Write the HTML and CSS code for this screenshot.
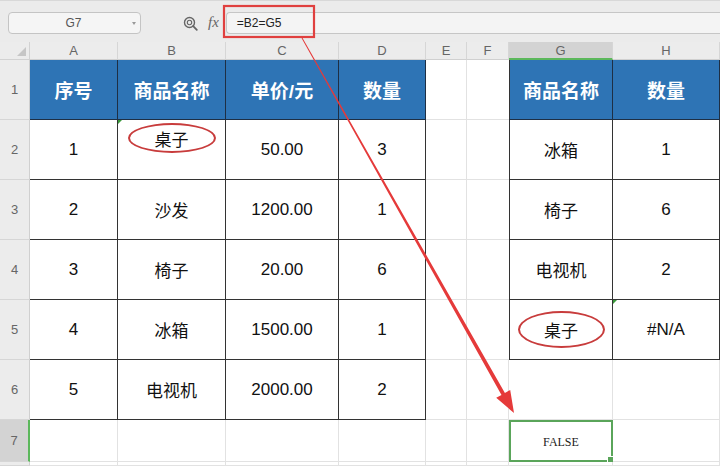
FILE: index.html
```html
<!DOCTYPE html>
<html lang="zh-CN">
<head>
  <meta charset="UTF-8" />
  <title>Sheet</title>
  <link rel="stylesheet" href="styles.css">
</head>
<body>
  <div class="toolbar">
    <div class="namebox"><span class="name">G7</span><span class="caret"></span></div>
    <svg class="zoom-ico" width="15" height="15" viewBox="0 0 15 15">
      <circle cx="6.5" cy="6.5" r="5" fill="none" stroke="#666" stroke-width="1.4"/>
      <circle cx="6.5" cy="6.5" r="2.2" fill="none" stroke="#666" stroke-width="1.1"/>
      <line x1="10.2" y1="10.2" x2="13.8" y2="13.8" stroke="#666" stroke-width="1.8" stroke-linecap="round"/>
    </svg>
    <span class="fx">fx</span>
    <div class="formula">=B2=G5</div>
  </div>

  <div class="sheet">
    <div class="corner"></div>
    <div class="colh">A</div>
    <div class="colh">B</div>
    <div class="colh">C</div>
    <div class="colh">D</div>
    <div class="colh">E</div>
    <div class="colh">F</div>
    <div class="colh sel">G</div>
    <div class="colh">H</div>

    <div class="rowh">1</div>
    <div class="c t th">序号</div>
    <div class="c t th">商品名称</div>
    <div class="c t th">单价/元</div>
    <div class="c t th">数量</div>
    <div class="c"></div>
    <div class="c nr"></div>
    <div class="c t th gl">商品名称</div>
    <div class="c t th">数量</div>

    <div class="rowh">2</div>
    <div class="c t">1</div>
    <div class="c t top mark"><span class="oval small">桌子</span></div>
    <div class="c t">50.00</div>
    <div class="c t">3</div>
    <div class="c"></div>
    <div class="c nr"></div>
    <div class="c t gl">冰箱</div>
    <div class="c t">1</div>

    <div class="rowh">3</div>
    <div class="c t">2</div>
    <div class="c t">沙发</div>
    <div class="c t">1200.00</div>
    <div class="c t">1</div>
    <div class="c"></div>
    <div class="c nr"></div>
    <div class="c t gl">椅子</div>
    <div class="c t">6</div>

    <div class="rowh">4</div>
    <div class="c t">3</div>
    <div class="c t">椅子</div>
    <div class="c t">20.00</div>
    <div class="c t">6</div>
    <div class="c"></div>
    <div class="c nr"></div>
    <div class="c t gl">电视机</div>
    <div class="c t">2</div>

    <div class="rowh">5</div>
    <div class="c t">4</div>
    <div class="c t">冰箱</div>
    <div class="c t">1500.00</div>
    <div class="c t">1</div>
    <div class="c"></div>
    <div class="c nr"></div>
    <div class="c t gl"><span class="oval">桌子</span></div>
    <div class="c t mark">#N/A</div>

    <div class="rowh">6</div>
    <div class="c t">5</div>
    <div class="c t">电视机</div>
    <div class="c t">2000.00</div>
    <div class="c t">2</div>
    <div class="c"></div>
    <div class="c"></div>
    <div class="c"></div>
    <div class="c"></div>

    <div class="rowh sel">7</div>
    <div class="c"></div>
    <div class="c"></div>
    <div class="c"></div>
    <div class="c"></div>
    <div class="c"></div>
    <div class="c"></div>
    <div class="c active">FALSE</div>
    <div class="c"></div>

    <div class="rowh"></div>
    <div class="c"></div>
    <div class="c"></div>
    <div class="c"></div>
    <div class="c"></div>
    <div class="c"></div>
    <div class="c"></div>
    <div class="c"></div>
    <div class="c"></div>
  </div>

  <!-- red annotation: box round the formula and the arrow down to G7 -->
  <svg class="annot" width="720" height="466" viewBox="0 0 720 466">
    <rect x="224" y="6" width="90" height="31" fill="none" stroke="#e0403f" stroke-width="2.2"/>
    <polygon fill="#e53a3a" points="301.6,38.2 302.4,37.8 504.9,392.9 510.2,390 514,413 496.2,397.8 501.5,394.9"/>
  </svg>
</body>
</html>
```

FILE: styles.css
```css
* {
  box-sizing: border-box;
}
body {
  margin: 0;
  width: 720px;
  height: 466px;
  overflow: hidden;
  position: relative;
  background: #fff;
  font-family: 'Liberation Sans', 'Noto Sans CJK SC', sans-serif;
  color: #111;
}
.toolbar {
  height: 42px;
  background: #ebebeb;
  border-top: 1px solid #d8d8d8;
  display: flex;
  align-items: flex-start;
  padding: 11px 0 0 8px;
}
.namebox {
  width: 133px;
  height: 22px;
  border: 1px solid #c4c4c4;
  border-radius: 4px;
  background: #f5f5f5;
  display: flex;
  align-items: center;
  padding-right: 4px;
}
.name {
  flex: 1;
  text-align: center;
  font-size: 12px;
  color: #555;
  padding-left: 6px;
}
.caret {
  width: 0;
  height: 0;
  border-left: 2px solid transparent;
  border-right: 2px solid transparent;
  border-top: 3px solid #999;
}
.zoom-ico {
  margin: 4px 0 0 42px;
}
.fx {
  margin: 2px 0 0 10px;
  font-family: 'Liberation Serif', serif;
  font-style: italic;
  font-size: 15px;
  color: #666;
}
.formula {
  flex: 1;
  height: 22px;
  margin-left: 7px;
  border: 1px solid #c6c6c6;
  border-right: none;
  border-radius: 4px 0 0 4px;
  background: #f4f4f4;
  padding-left: 10px;
  display: flex;
  align-items: center;
  font-size: 12px;
  color: #222;
}

.sheet {
  display: grid;
  grid-template-columns: 30px 88px 108px 113px 87px 41px 42px 104px 107px;
  grid-template-rows: 18px repeat(6, 60px) 42px 1fr;
  height: 424px;
}
.corner,
.colh,
.rowh {
  background: #ececec;
  color: #666;
  font-size: 13px;
  display: flex;
  align-items: center;
  justify-content: center;
}
.corner {
  border-right: 1px solid #d2d2d2;
  border-bottom: 1px solid #d2d2d2;
  position: relative;
}
.corner::after {
  content: '';
  position: absolute;
  right: 3px;
  bottom: 3px;
  border-left: 9px solid transparent;
  border-bottom: 9px solid #c6c6c6;
}
.colh {
  border-right: 1px solid #d6d6d6;
  border-bottom: 1px solid #d0d0d0;
}
.colh.sel {
  background: #d3d3d3;
  border-bottom: 2px solid #5cb85c;
}
.rowh {
  border-right: 1px solid #d0d0d0;
  border-bottom: 1px solid #d6d6d6;
}
.rowh.sel {
  background: #d3d3d3;
  border-right: 2px solid #5cb85c;
}

.c {
  border-right: 1px solid #e2e2e2;
  border-bottom: 1px solid #e2e2e2;
  display: flex;
  align-items: center;
  justify-content: center;
  font-size: 17px;
  position: relative;
}
.c.nr {
  border-right: none;
}
.c.t {
  border-right-color: #333;
  border-bottom-color: #333;
}
.c.gl {
  border-left: 1px solid #333;
}
.c.th {
  background: #2e74b5;
  color: #fff;
  font-weight: bold;
  font-size: 19px;
  border-right-color: #1e2f44;
  border-bottom-color: #1e2f44;
}
.c.top {
  align-items: flex-start;
  padding-top: 3px;
}
.c.mark::before {
  content: '';
  position: absolute;
  left: 0;
  top: 0;
  border-top: 4px solid #3a9a3a;
  border-right: 4px solid transparent;
}
.oval {
  display: inline-flex;
  align-items: center;
  justify-content: center;
  width: 87px;
  height: 37px;
  border: 2px solid #c83c3c;
  border-radius: 50%;
}
.oval.small {
  width: 88px;
  height: 30px;
}
.c.active {
  border: 2px solid #5aa55a;
  padding-top: 3px;
  font-family: 'Liberation Serif', serif;
  font-size: 12px;
  color: #222;
}
.c.active::after {
  content: '';
  position: absolute;
  right: -3px;
  bottom: -3px;
  width: 5px;
  height: 5px;
  background: #5aa55a;
  border: 1px solid #fff;
}

.annot {
  position: absolute;
  left: 0;
  top: 0;
  pointer-events: none;
}
```
